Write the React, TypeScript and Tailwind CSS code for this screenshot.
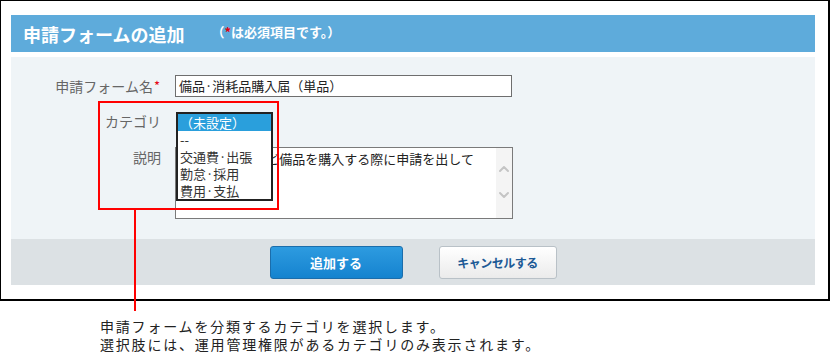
import { ChevronDown, ChevronUp } from "lucide-react";

const font = { fontFamily: '"Noto Sans CJK JP", "Noto Sans", sans-serif' };

const options = ["（未設定）", "--", "交通費·出張", "勤怠·採用", "費用·支払"];

export default function App() {
  return (
    <div
      className="relative w-[831px] h-[356px] bg-white text-[#333]"
      style={font}
    >
      {/* Dialog frame */}
      <div className="w-[830px] h-[301px] border-l border-t border-r-2 border-b-2 border-black pl-[10px] pt-[14px]">
        <div className="w-[804px]">
          {/* Header */}
          <div className="h-[37px] bg-[#5eabdb] flex items-center pl-[12px]">
            <span className="text-[18px] font-bold text-white leading-none">申請フォームの追加</span>
            <span className="ml-[27px] -mt-[5px] text-[13px] font-bold text-white leading-none">
              （<span className="text-[#e60012]">*</span>は必須項目です。）
            </span>
          </div>

          {/* Form body */}
          <div className="mt-[5px] bg-[#eff4f7] pt-[18px] pb-[20px]">
            <div className="flex items-center h-[22px]">
              <div className="w-[152px] text-right text-[14px] text-[#666] leading-none pr-[3px]">
                申請フォーム名<span className="text-[#e60012] text-[13px] align-top pl-[1px]">*</span>
              </div>
              <div className="ml-[12px] w-[337px] h-[22px] border border-[#6e6e6e] bg-white text-[13px] leading-[20px] pl-[3px] text-[#222]">
                備品·消耗品購入届（単品）
              </div>
            </div>

            <div className="flex items-center h-[24px] mt-[12px]">
              <div className="w-[152px] text-right text-[14px] text-[#666] leading-none pr-[2px]">カテゴリ</div>
              <div className="relative ml-[12px] h-[24px] w-[337px]">
                <div className="absolute left-[1px] top-[3px] w-[97px] border-2 border-[#222] bg-white z-10">
                  {options.map((o, i) => (
                    <div
                      key={o}
                      className={
                        i === 0
                          ? "h-[17px] leading-[17px] text-[13px] pl-[2px] bg-[#2a9fdc] text-white"
                          : "h-[17px] leading-[17px] text-[13px] pl-[2px] text-[#333]"
                      }
                    >
                      {o}
                    </div>
                  ))}
                </div>
              </div>
            </div>

            <div className="flex mt-[14px]">
              <div className="w-[152px] text-right text-[14px] text-[#666] leading-[20px] pr-[2px]">説明</div>
              <div className="ml-[12px] w-[338px] h-[72px] border border-[#7a7a7a] bg-white flex">
                <div className="flex-1 text-[13px] leading-[17px] pt-[2px] pl-[5px] text-[#222] overflow-hidden whitespace-nowrap">
                  文具·消耗品など備品を購入する際に申請を出して
                </div>
                <div className="w-[16px] bg-[#f4f4f4] flex flex-col items-center pt-[13px] gap-[10px] text-[#c4c4c4]">
                  <ChevronUp size={16} strokeWidth={3} />
                  <ChevronDown size={16} strokeWidth={3} />
                </div>
              </div>
            </div>
          </div>

          {/* Footer buttons */}
          <div className="h-[46px] bg-[#dce1e4] flex justify-center items-start pt-[7px] gap-[36px]">
            <button className="w-[133px] h-[33px] rounded-[3px] border border-[#1b6dab] bg-gradient-to-b from-[#2d9be0] to-[#1483cf] text-white text-[13px] font-bold">
              追加する
            </button>
            <button className="w-[118px] h-[33px] rounded-[3px] border border-[#b9c1c7] bg-gradient-to-b from-white to-[#ebebeb] text-[#1d5a96] text-[12px] font-bold tracking-[-0.5px]">
              キャンセルする
            </button>
          </div>
        </div>
      </div>

      {/* Annotation */}
      <div className="absolute left-[98px] top-[101px] w-[181px] h-[109px] border-2 border-[#ff0000] z-20" />
      <div className="absolute left-[134px] top-[209px] w-[2px] h-[102px] bg-[#ff0000] z-20" />

      <div className="pl-[100px] pt-[16px] text-[14px] leading-[18px] tracking-[1.8px] text-[#222]">
        <div>申請フォームを分類するカテゴリを選択します。</div>
        <div>選択肢には、運用管理権限があるカテゴリのみ表示されます。</div>
      </div>
    </div>
  );
}
